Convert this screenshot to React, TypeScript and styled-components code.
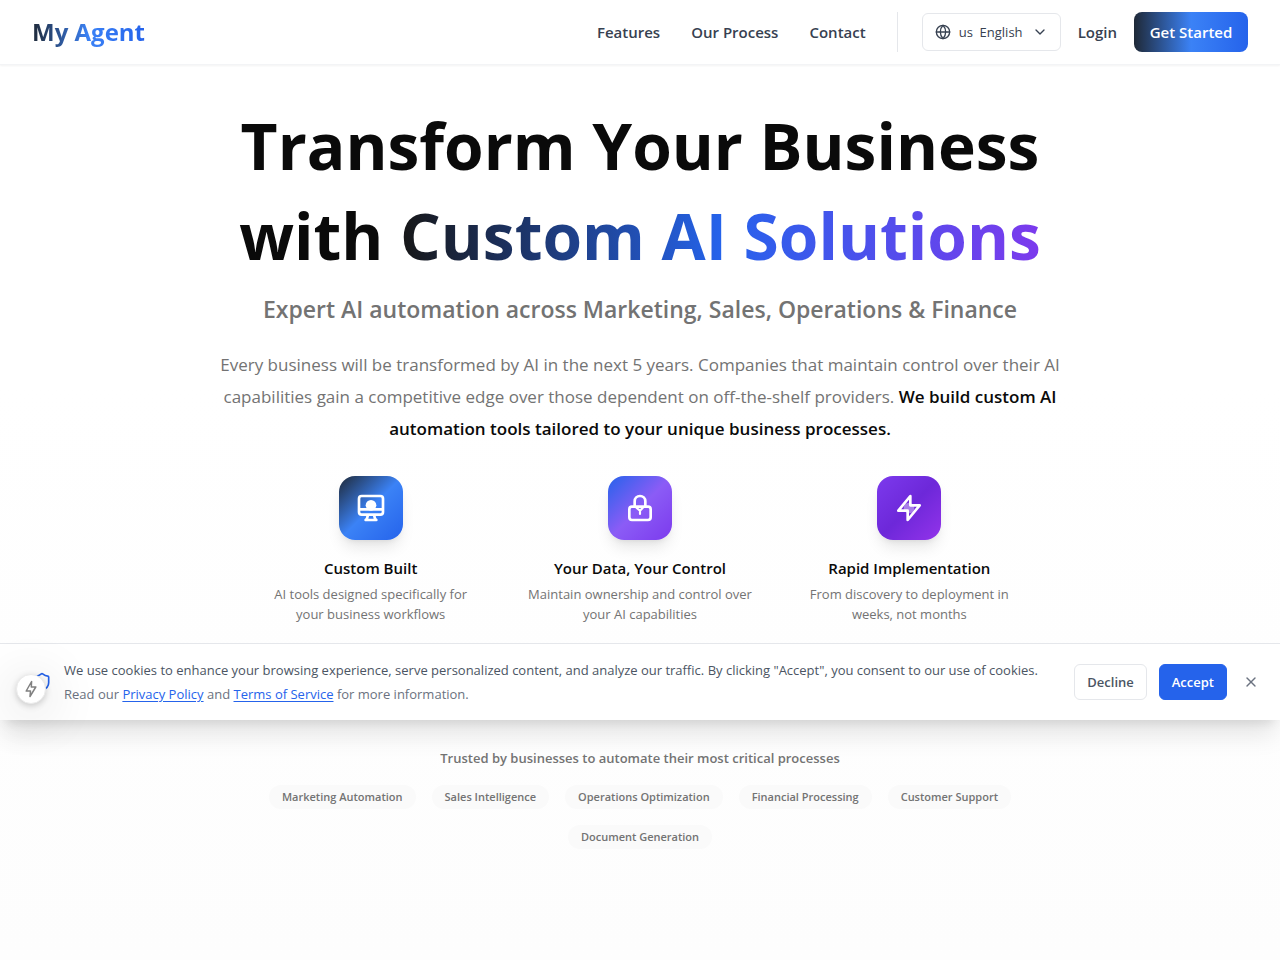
import React from "react";
import styled, { createGlobalStyle } from "styled-components";
import { ChevronDown, Globe, Shield, X } from "lucide-react";

const GlobalStyle = createGlobalStyle`
  *, *::before, *::after { box-sizing: border-box; }
  body {
    margin: 0;
    background: #ffffff;
    color: #0a0a0a;
    font-family: "Open Sans", "Noto Sans", sans-serif;
  }
  h1, h2, h3, p, ul { margin: 0; padding: 0; }
  a { color: inherit; text-decoration: none; }
  button, select { font-family: inherit; cursor: pointer; }
`;

const Page = styled.div`
  min-height: 100vh;
  background: linear-gradient(to bottom, #ffffff 40%, #fdfdfd);
`;

const Header = styled.header`
  display: flex;
  align-items: center;
  justify-content: space-between;
  height: 65px;
  padding: 0 32px;
  background: #ffffff;
  border-bottom: 1px solid #f3f4f6;
  box-shadow: 0 1px 2px rgba(0, 0, 0, 0.05);
`;

const Logo = styled.a`
  font-size: 24px;
  line-height: 32px;
  font-weight: 700;
  color: transparent;
  background: linear-gradient(to right, #1f2937, #3b82f6 50%, #2563eb);
  background-clip: text;
  -webkit-background-clip: text;
`;

const HeaderRight = styled.div`
  display: flex;
  align-items: center;
`;

const Nav = styled.nav`
  display: flex;
  gap: 31px;
  padding-right: 31px;
`;

const NavLink = styled.a`
  font-size: 15px;
  line-height: 24px;
  font-weight: 600;
  color: #374151;
`;

const Account = styled.div`
  display: flex;
  align-items: center;
  gap: 17px;
  height: 40px;
  padding-left: 24px;
  border-left: 1px solid #e5e7eb;
`;

const LanguageField = styled.label`
  display: grid;
  grid-template-columns: 12px 16px 1fr 16px 12px;
  align-items: center;
  width: 139px;
  height: 38px;
  border: 1px solid #e5e7eb;
  border-radius: 6px;
  color: #374151;

  svg { grid-row: 1; pointer-events: none; }
  svg:first-of-type { grid-column: 2; }
  svg:last-of-type { grid-column: 4; }
`;

const LanguageSelect = styled.select`
  grid-row: 1;
  grid-column: 1 / -1;
  width: 100%;
  height: 36px;
  padding: 0 32px 0 36px;
  border: 0;
  background: transparent;
  appearance: none;
  font-size: 13px;
  color: #374151;
`;

const PrimaryLink = styled.a`
  display: inline-flex;
  align-items: center;
  justify-content: center;
  width: 114px;
  height: 40px;
  border-radius: 8px;
  background: linear-gradient(to right, #1f2937, #3b82f6 50%, #2563eb);
  font-size: 15px;
  font-weight: 600;
  color: #ffffff;
`;

const Hero = styled.section`
  display: flex;
  flex-direction: column;
  align-items: center;
  padding: 36px 24px 19px;
  text-align: center;
`;

const Title = styled.h1`
  max-width: 896px;
  font-size: 64px;
  line-height: 90px;
  font-weight: 700;
`;

const GradientText = styled.span`
  color: transparent;
  background: linear-gradient(to right, #171717, #2563eb 50%, #7c3aed);
  background-clip: text;
  -webkit-background-clip: text;
`;

const Subtitle = styled.p`
  margin-top: 12px;
  font-size: 23px;
  line-height: 32px;
  font-weight: 600;
  color: #737373;
`;

const Lead = styled.p`
  max-width: 896px;
  margin-top: 24px;
  font-size: 17px;
  line-height: 32px;
  color: #737373;

  strong { font-weight: 600; color: #0a0a0a; }
`;

const FeatureGrid = styled.ul`
  display: grid;
  grid-template-columns: repeat(3, 1fr);
  gap: 40px;
  width: 100%;
  max-width: 768px;
  margin-top: 31px;
  list-style: none;
`;

const Feature = styled.li`
  display: flex;
  flex-direction: column;
  align-items: center;
`;

const IconTile = styled.div<{ $gradient: string }>`
  display: flex;
  align-items: center;
  justify-content: center;
  width: 64px;
  height: 64px;
  border-radius: 16px;
  background: linear-gradient(135deg, ${(p) => p.$gradient});
  box-shadow: 0 10px 15px -3px rgba(0, 0, 0, 0.1), 0 4px 6px -4px rgba(0, 0, 0, 0.1);
`;

const FeatureTitle = styled.h2`
  margin-top: 16px;
  font-size: 15px;
  line-height: 24px;
  font-weight: 600;
`;

const FeatureText = styled.p`
  margin-top: 4px;
  font-size: 13px;
  line-height: 20px;
  color: #737373;
`;

const CookieBar = styled.aside`
  position: relative;
  display: flex;
  align-items: center;
  gap: 12px;
  padding: 14px 17px 14px 32px;
  background: #ffffff;
  border-top: 1px solid #e5e7eb;
  box-shadow: 0 20px 25px -5px rgba(0, 0, 0, 0.1), 0 8px 10px -6px rgba(0, 0, 0, 0.1);

  > svg { flex: none; color: #2563eb; }
`;

const CookieText = styled.div`
  flex: 1;
  font-size: 13px;
  line-height: 24px;
  color: #4b5563;
`;

const CookieNote = styled.p`
  color: #6b7280;

  a { color: #2563eb; text-decoration: underline; text-underline-offset: 2px; }
`;

const CookieButton = styled.button<{ $primary?: boolean }>`
  flex: none;
  height: 36px;
  padding: 0 12px;
  border: 1px solid ${(p) => (p.$primary ? "#2563eb" : "#e5e7eb")};
  border-radius: 6px;
  background: ${(p) => (p.$primary ? "#2563eb" : "#ffffff")};
  font-size: 13px;
  font-weight: 600;
  color: ${(p) => (p.$primary ? "#ffffff" : "#4b5563")};
`;

const CloseButton = styled.button`
  display: flex;
  flex: none;
  padding: 4px;
  border: 0;
  background: transparent;
  color: #6b7280;
`;

const FloatingButton = styled.button`
  position: absolute;
  left: 16px;
  top: 30px;
  display: flex;
  align-items: center;
  justify-content: center;
  width: 30px;
  height: 30px;
  padding: 0;
  border: 1px solid #ebebeb;
  border-radius: 50%;
  background: #ffffff;
  color: #808080;
  box-shadow: 0 2px 6px rgba(0, 0, 0, 0.18), 0 8px 50px 10px rgba(0, 0, 0, 0.09);
`;

const Trusted = styled.section`
  display: flex;
  flex-direction: column;
  align-items: center;
  padding: 28px 24px 48px;
`;

const TrustedTitle = styled.h3`
  font-size: 13px;
  line-height: 20px;
  font-weight: 600;
  color: #737373;
`;

const TagList = styled.ul`
  display: flex;
  flex-wrap: wrap;
  justify-content: center;
  gap: 16px;
  max-width: 768px;
  margin-top: 17px;
  list-style: none;
`;

const Tag = styled.li`
  padding: 0 13px;
  border-radius: 12px;
  background: #fafafa;
  font-size: 11px;
  line-height: 24px;
  font-weight: 600;
  color: #737373;
`;

const strokeProps = {
  width: 32,
  height: 32,
  viewBox: "0 0 24 24",
  fill: "none",
  stroke: "#ffffff",
  strokeWidth: 2,
  strokeLinecap: "round" as const,
  strokeLinejoin: "round" as const,
  "aria-hidden": true,
};

const MonitorIcon = () => (
  <svg {...strokeProps}>
    <path d="M9.75 17L9 20l-1 1h8l-1-1-.75-3M3 13h18M5 17h14a2 2 0 002-2V5a2 2 0 00-2-2H5a2 2 0 00-2 2v10a2 2 0 002 2z" />
    <circle cx="12" cy="10" r="4" fill="#ffffff" stroke="none" />
  </svg>
);

const LockIcon = () => (
  <svg {...strokeProps}>
    <path d="M6 21h12a2 2 0 002-2v-6a2 2 0 00-2-2H6a2 2 0 00-2 2v6a2 2 0 002 2zm10-10V7a4 4 0 00-8 0v4h8z" />
    <path d="M9.5 12l2.5 2 2-2M12 14v2.500" strokeWidth="1.6" />
  </svg>
);

const BoltIcon = () => (
  <svg {...strokeProps}>
    <circle cx="12" cy="12" r="4" fill="#ffffff" fillOpacity="0.4" stroke="none" />
    <path d="M13 10V3L4 14h7v7l9-11h-7z" />
  </svg>
);

const SmallBoltIcon = () => (
  <svg width="12" height="18" viewBox="0 0 12 18" fill="none" stroke="currentColor" strokeWidth="1.500" strokeLinejoin="round" aria-hidden="true">
    <path d="M6.600 1.500L1.200 11h4.300L5 16.500 10.800 7H6.300z" />
  </svg>
);

const features = [
  {
    title: "Custom Built",
    text: "AI tools designed specifically for your\u00a0business workflows",
    gradient: "#1f2937, #3b82f6 50%, #2563eb",
    icon: <MonitorIcon />,
  },
  {
    title: "Your Data, Your Control",
    text: "Maintain ownership and control over your AI capabilities",
    gradient: "#2563eb, #8b5cf6 50%, #7c3aed",
    icon: <LockIcon />,
  },
  {
    title: "Rapid Implementation",
    text: "From discovery to deployment in weeks, not months",
    gradient: "#7c3aed, #6d28d9 50%, #9333ea",
    icon: <BoltIcon />,
  },
];

const tags = [
  "Marketing Automation",
  "Sales Intelligence",
  "Operations Optimization",
  "Financial Processing",
  "Customer Support",
  "Document Generation",
];

export default function App() {
  return (
    <>
      <GlobalStyle />
      <Page>
        <Header>
          <Logo href="#">My Agent</Logo>
          <HeaderRight>
            <Nav>
              <NavLink href="#features">Features</NavLink>
              <NavLink href="#process">Our Process</NavLink>
              <NavLink href="#contact">Contact</NavLink>
            </Nav>
            <Account>
              <LanguageField>
                <Globe size={16} />
                <LanguageSelect aria-label="Language" defaultValue="en">
                  <option value="en">{"us\u00a0 English"}</option>
                </LanguageSelect>
                <ChevronDown size={16} />
              </LanguageField>
              <NavLink href="#login">Login</NavLink>
              <PrimaryLink href="#start">Get Started</PrimaryLink>
            </Account>
          </HeaderRight>
        </Header>

        <main>
          <Hero>
            <Title>
              Transform Your Business
              <br />
              with <GradientText>Custom AI Solutions</GradientText>
            </Title>
            <Subtitle>Expert AI automation across Marketing, Sales, Operations &amp; Finance</Subtitle>
            <Lead>
              Every business will be transformed by AI in the next 5 years. Companies that maintain
              control over their AI capabilities gain a competitive edge over those dependent on
              off-the-shelf providers.{" "}
              <strong>
                We build custom AI automation tools tailored to your unique business processes.
              </strong>
            </Lead>
            <FeatureGrid>
              {features.map((f) => (
                <Feature key={f.title}>
                  <IconTile $gradient={f.gradient}>{f.icon}</IconTile>
                  <FeatureTitle>{f.title}</FeatureTitle>
                  <FeatureText>{f.text}</FeatureText>
                </Feature>
              ))}
            </FeatureGrid>
          </Hero>

          <CookieBar aria-label="Cookie consent">
            <Shield size={20} />
            <CookieText>
              <p>
                We use cookies to enhance your browsing experience, serve personalized content, and
                analyze our traffic. By clicking "Accept", you consent to our use of cookies.
              </p>
              <CookieNote>
                Read our <a href="#privacy">Privacy Policy</a> and{" "}
                <a href="#terms">Terms of Service</a> for more information.
              </CookieNote>
            </CookieText>
            <CookieButton type="button">Decline</CookieButton>
            <CookieButton type="button" $primary>
              Accept
            </CookieButton>
            <CloseButton type="button" aria-label="Close">
              <X size={16} />
            </CloseButton>
            <FloatingButton type="button" aria-label="Quick actions">
              <SmallBoltIcon />
            </FloatingButton>
          </CookieBar>

          <Trusted>
            <TrustedTitle>Trusted by businesses to automate their most critical processes</TrustedTitle>
            <TagList>
              {tags.map((tag) => (
                <Tag key={tag}>{tag}</Tag>
              ))}
            </TagList>
          </Trusted>
        </main>
      </Page>
    </>
  );
}
